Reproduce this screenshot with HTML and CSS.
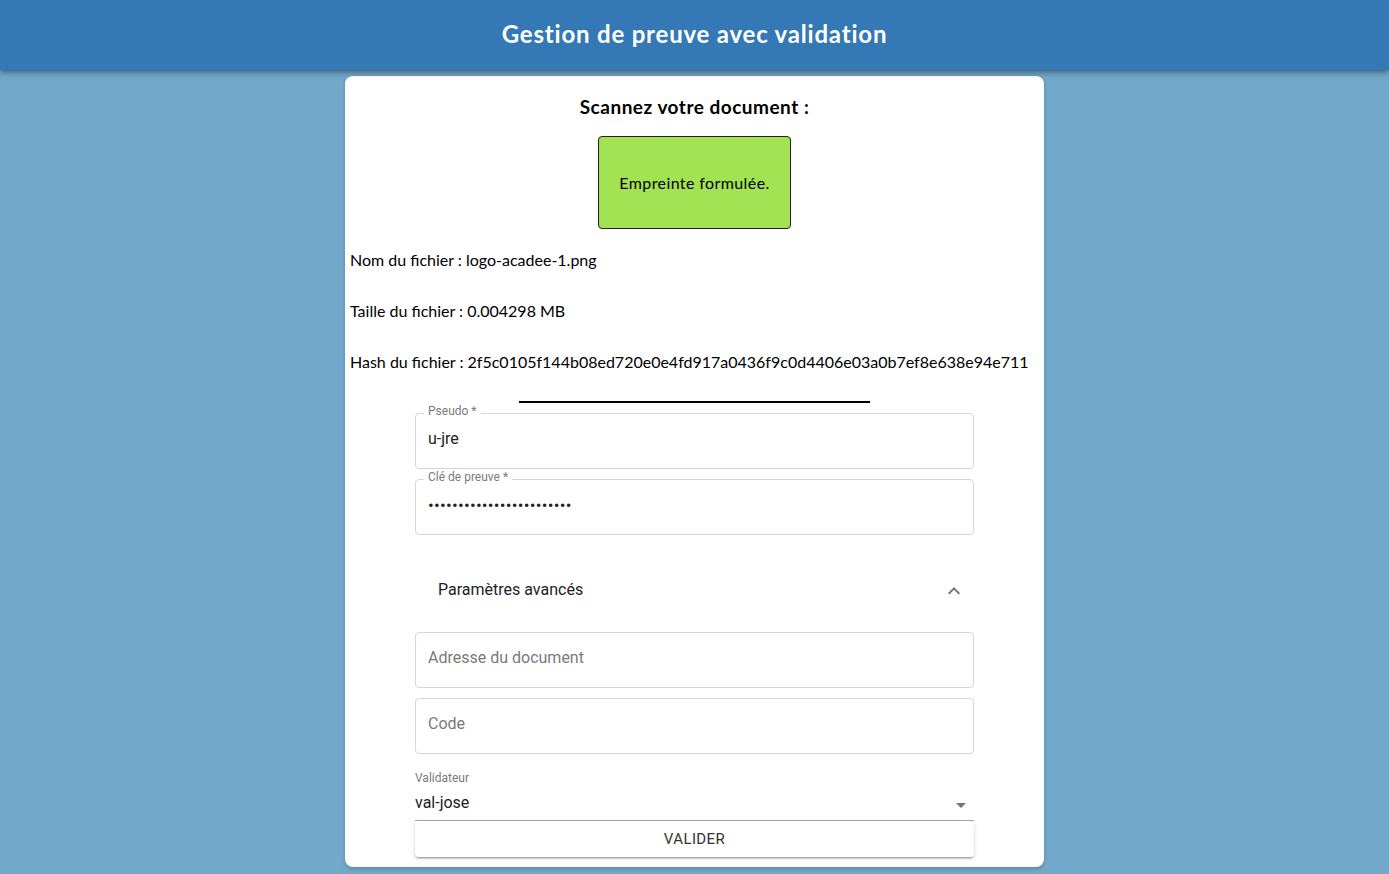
FILE: index.html
```html
<!DOCTYPE html>
<html lang="fr">
<head>
<meta charset="utf-8">
<title>Gestion de preuve avec validation</title>
<link rel="stylesheet" href="styles.css">
</head>
<body>
<header class="topbar">
  <h1 class="topbar-title">Gestion de preuve avec validation</h1>
</header>
<main class="page">
  <section class="card">
    <h2 class="card-title">Scannez votre document :</h2>
    <div class="dropzone">Empreinte formulée.</div>
    <div class="file-info">
      <p class="info-line">Nom du fichier : logo-acadee-1.png</p>
      <p class="info-line">Taille du fichier : 0.004298 MB</p>
      <p class="info-line">Hash du fichier : 2f5c0105f144b08ed720e0e4fd917a0436f9c0d4406e03a0b7ef8e638e94e711</p>
    </div>
    <hr class="divider">
    <form class="form">
      <div class="outlined labelled">
        <span class="float-label">Pseudo *</span>
        <span class="field-value">u-jre</span>
      </div>
      <div class="outlined labelled second">
        <span class="float-label">Clé de preuve *</span>
        <span class="field-value dots">••••••••••••••••••••••••</span>
      </div>
      <div class="accordion">
        <span class="accordion-label">Paramètres avancés</span>
        <svg class="chevron" width="24" height="24" viewBox="0 0 24 24"><path d="M7.41 15.41 12 10.83l4.59 4.58L18 14l-6-6-6 6z" fill="#757575"/></svg>
      </div>
      <div class="outlined plain"><span class="placeholder">Adresse du document</span></div>
      <div class="outlined plain next"><span class="placeholder">Code</span></div>
      <div class="select">
        <span class="select-label">Validateur</span>
        <div class="select-row">
          <span class="select-value">val-jose</span>
          <svg class="caret" width="24" height="24" viewBox="0 0 24 24"><path d="M7 10l5 5 5-5z" fill="#757575"/></svg>
        </div>
      </div>
      <button type="button" class="submit">VALIDER</button>
    </form>
  </section>
</main>
</body>
</html>
```
FILE: styles.css
```css
html, body {
  margin: 0;
  padding: 0;
}
body {
  background: #72a9cb;
  font-family: "Lato", "Open Sans", sans-serif;
  color: #000;
  height: 874px;
  overflow: hidden;
}
.topbar {
  position: relative;
  z-index: 2;
  height: 70px;
  box-sizing: border-box;
  padding-bottom: 3px;
  background: #3479b5;
  box-shadow: 0 2px 4px -1px rgba(0,0,0,0.25), 0 4px 5px 0 rgba(0,0,0,0.16), 0 1px 10px 0 rgba(0,0,0,0.12);
  display: flex;
  align-items: center;
  justify-content: center;
}
.topbar-title {
  margin: 0;
  color: #fff;
  font-size: 24px;
  font-weight: 700;
  letter-spacing: 0.8px;
}
.page {
  display: flex;
  justify-content: center;
  padding-top: 6px;
}
.card {
  width: 699px;
  height: 791px;
  box-sizing: border-box;
  background: #fff;
  border-radius: 8px;
  padding: 18px 5px 0;
  box-shadow: 0 2px 4px rgba(0,0,0,0.2);
  display: flex;
  flex-direction: column;
  align-items: stretch;
}
.card-title {
  margin: 0;
  text-align: center;
  font-size: 19px;
  font-weight: 700;
  letter-spacing: 0.5px;
  line-height: 26px;
}
.dropzone {
  align-self: center;
  margin-top: 16px;
  width: 193px;
  height: 93px;
  box-sizing: border-box;
  background: #a3e253;
  border: 1px solid #222;
  border-radius: 4px;
  display: flex;
  align-items: center;
  justify-content: center;
  font-size: 16px;
  letter-spacing: 0.4px;
  padding-bottom: 1px;
}
.file-info {
  margin-top: 21px;
  display: flex;
  flex-direction: column;
  gap: 32px;
}
.info-line {
  margin: 0;
  font-size: 16px;
  line-height: 19px;
}
.divider {
  width: 351px;
  margin: 30px auto 0;
  border: 0;
  height: 2px;
  background: #000;
}
.form {
  width: 559px;
  align-self: center;
  margin-top: 10px;
  font-family: "Roboto", sans-serif;
  display: flex;
  flex-direction: column;
}
.outlined {
  height: 56px;
  box-sizing: border-box;
  border: 1px solid #d6d6d6;
  border-radius: 4px;
  padding: 0 12px 5px;
  display: flex;
  align-items: center;
}
.labelled {
  position: relative;
}
.second {
  margin-top: 10px;
}
.float-label {
  position: absolute;
  top: -10px;
  left: 8px;
  padding: 0 4px;
  background: #fff;
  font-size: 12px;
  line-height: 14px;
  color: #7a7a7a;
}
.field-value {
  font-size: 16px;
  color: #222;
}
.dots {
  font-size: 17px;
  letter-spacing: 0.25px;
}
.accordion {
  height: 48px;
  margin-top: 30px;
  display: flex;
  align-items: center;
  justify-content: space-between;
  padding: 0 8px 0 23px;
}
.accordion-label {
  font-size: 16px;
  color: #222;
}
.chevron {
  display: block;
  margin-top: 4px;
}
.plain {
  margin-top: 19px;
}
.next {
  margin-top: 10px;
}
.placeholder {
  font-size: 16px;
  color: #7a7a7a;
}
.select {
  margin-top: 17px;
  display: flex;
  flex-direction: column;
}
.select-label {
  font-size: 12px;
  color: #7a7a7a;
  line-height: 14px;
}
.select-row {
  height: 36px;
  box-sizing: border-box;
  display: flex;
  align-items: center;
  justify-content: space-between;
  border-bottom: 1px solid #a8a8a8;
}
.select-value {
  font-size: 16px;
  color: #222;
}
.caret {
  margin-right: 1px;
  margin-top: 5px;
}
.submit {
  height: 36px;
  border: 0;
  background: #fff;
  border-radius: 4px;
  box-shadow: 0 3px 1px -2px rgba(0,0,0,0.2), 0 2px 2px 0 rgba(0,0,0,0.14), 0 1px 5px 0 rgba(0,0,0,0.12);
  font-family: "Roboto", sans-serif;
  font-size: 15px;
  color: #333;
  letter-spacing: 0.4px;
  padding-bottom: 2px;
}
```
